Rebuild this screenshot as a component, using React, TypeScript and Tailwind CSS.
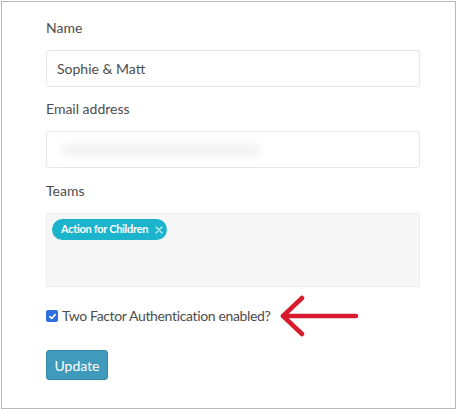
export default function App() {
  return (
    <div className="h-[410px] w-[457px] bg-white p-px font-['Lato',sans-serif] text-[#4d4d4d]">
      <div className="h-[408px] w-[455px] border border-[#b9b9b9] pl-[44px] pt-[15px]">
        <div className="text-[14px] leading-[22px]">Name</div>
        <div className="mt-[11px] flex h-[37px] w-[374px] items-center rounded-[3px] border border-[#e6e6e6] px-[10px] text-[14px]">
          Sophie &amp; Matt
        </div>

        <div className="mt-[11px] text-[14px] leading-[22px]">Email address</div>
        <div className="mt-[11px] flex h-[37px] w-[374px] items-center rounded-[3px] border border-[#e6e6e6] px-[14px]">
          <div className="h-[14px] w-[200px] rounded-full bg-[#f4f4f4] blur-[3px]" />
        </div>

        <div className="mt-[12px] text-[14px] leading-[22px]">Teams</div>
        <div className="mt-[11px] flex h-[74px] w-[374px] items-start rounded-[2px] border border-[#ececec] bg-[#f7f7f7] px-[5px] pt-[5px]">
          <span className="flex h-[21px] items-center gap-[7px] rounded-full bg-[#1cb4cd] pl-[9px] pr-[4px] text-[11px] font-bold tracking-[-0.3px] text-white">
            Action for Children
            <svg width="8" height="8" viewBox="0 0 8 8" className="stroke-white/80" strokeWidth="1.2" strokeLinecap="round">
              <path d="M1 1L7 7M7 1L1 7" />
            </svg>
          </span>
        </div>

        <div className="mt-[18px] flex h-[22px] items-center gap-[4px]">
          <span className="flex h-[12px] w-[12px] items-center justify-center rounded-[2px] bg-[#2f6fde]">
            <svg width="9" height="9" viewBox="0 0 9 9" fill="none" stroke="white" strokeWidth="1.6" strokeLinecap="round" strokeLinejoin="round">
              <path d="M1.8 4.6L3.7 6.4L7.2 2.6" />
            </svg>
          </span>
          <span className="text-[14px] leading-[22px] tracking-[-0.35px]">Two Factor Authentication enabled?</span>
          <svg width="82" height="42" viewBox="0 0 82 42" fill="none" stroke="#d81a2e" strokeWidth="4.5" strokeLinecap="round" strokeLinejoin="round" className="-my-[10px] ml-[5px]">
            <path d="M4 21H77" />
            <path d="M23 3L4 21L23 39" />
          </svg>
        </div>

        <button className="mt-[23px] h-[30px] w-[62px] rounded-[3px] border border-[#3689a6] bg-[#3f9abb] text-[14px] text-white">
          Update
        </button>
      </div>
    </div>
  );
}
